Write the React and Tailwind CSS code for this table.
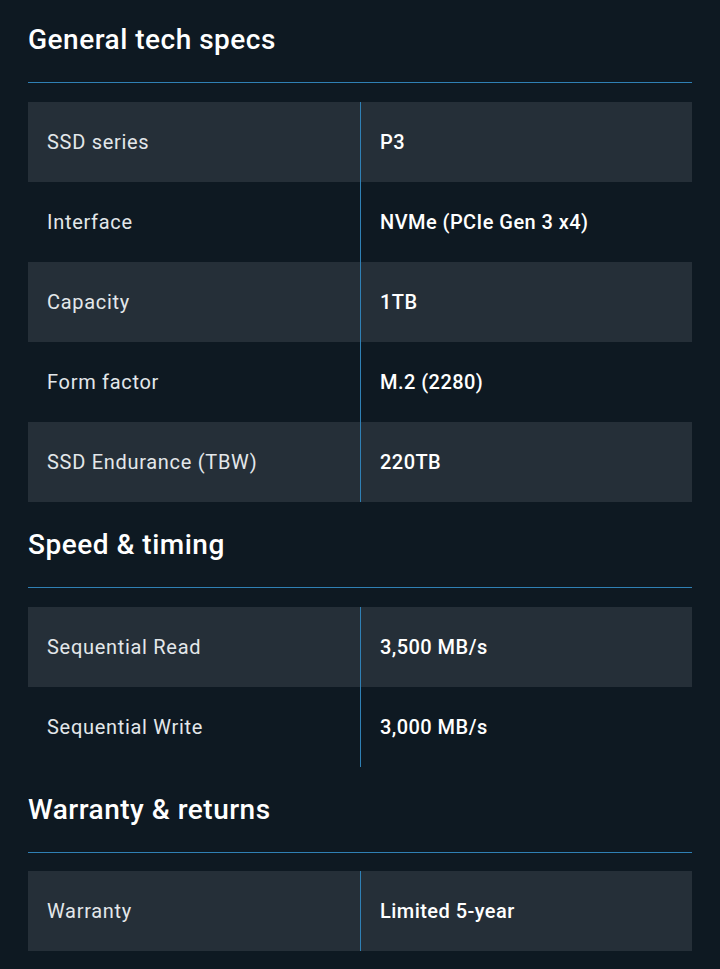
import React from "react";

const sections = [
  {
    title: "General tech specs",
    pt: "pt-[22px]",
    mt: "mt-[19px]",
    rows: [
      ["SSD series", "P3"],
      ["Interface", "NVMe (PCIe Gen 3 x4)"],
      ["Capacity", "1TB"],
      ["Form factor", "M.2 (2280)"],
      ["SSD Endurance (TBW)", "220TB"],
    ],
  },
  {
    title: "Speed & timing",
    pt: "pt-[25px]",
    mt: "mt-[19px]",
    rows: [
      ["Sequential Read", "3,500 MB/s"],
      ["Sequential Write", "3,000 MB/s"],
    ],
  },
  {
    title: "Warranty & returns",
    pt: "pt-[25px]",
    mt: "mt-[18px]",
    rows: [["Warranty", "Limited 5-year"]],
  },
];

export default function App() {
  return (
    <div
      className="w-[720px] h-[969px] bg-[#0e1922] px-[28px] overflow-hidden"
      style={{ fontFamily: "Roboto, 'Noto Sans', sans-serif" }}
    >
      {sections.map((s) => (
        <section key={s.title}>
          <h2
            className={`${s.pt} pb-[24px] text-[28px] leading-[36px] font-medium tracking-[0.5px] text-white border-b border-[#2f80b5]`}
          >
            {s.title}
          </h2>
          <div className={`${s.mt} flex flex-col`}>
            {s.rows.map(([k, v], i) => (
              <div
                key={k}
                className={`grid grid-cols-2 h-[80px] ${i % 2 === 0 ? "bg-[#252f38]" : "bg-transparent"}`}
              >
                <div className="flex items-center pl-[19px] text-[20px] tracking-[0.7px] text-[#e3e7ea]">
                  {k}
                </div>
                <div className="flex items-center pl-[19px] text-[20px] font-medium tracking-[0.45px] text-white border-l border-[#2f80b5]">
                  {v}
                </div>
              </div>
            ))}
          </div>
        </section>
      ))}
    </div>
  );
}
